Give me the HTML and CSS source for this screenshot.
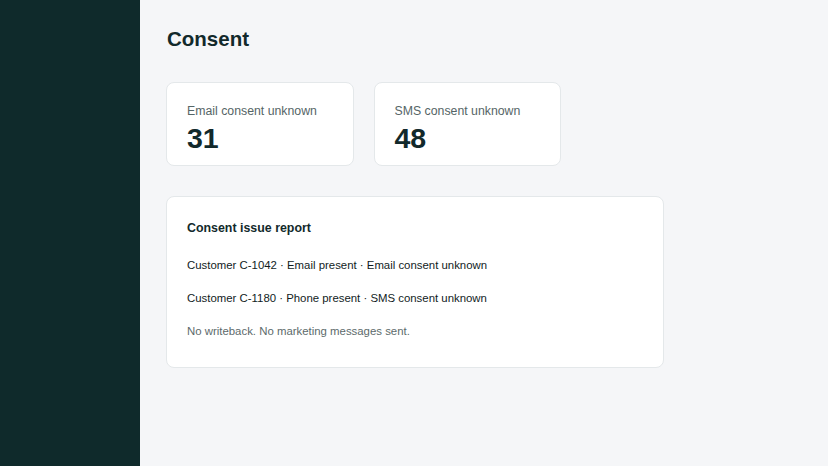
FILE: index.html
```html
<!DOCTYPE html>
<html lang="en">
<head>
<meta charset="utf-8">
<title>Consent</title>
<link rel="stylesheet" href="styles.css">
</head>
<body>
<div class="app">
  <aside class="sidebar"></aside>
  <main class="main">
    <h1 class="page-title">Consent</h1>
    <div class="stats">
      <div class="stat-card">
        <div class="stat-label">Email consent unknown</div>
        <div class="stat-value">31</div>
      </div>
      <div class="stat-card">
        <div class="stat-label">SMS consent unknown</div>
        <div class="stat-value">48</div>
      </div>
    </div>
    <section class="report">
      <h2 class="report-title">Consent issue report</h2>
      <div class="report-rows">
        <div class="report-row">Customer C-1042 · Email present · Email consent unknown</div>
        <div class="report-row">Customer C-1180 · Phone present · SMS consent unknown</div>
        <div class="report-note">No writeback. No marketing messages sent.</div>
      </div>
    </section>
  </main>
</div>
</body>
</html>
```
FILE: styles.css
```css
* { box-sizing: border-box; }
html, body {
  margin: 0;
  padding: 0;
  height: 100%;
}
body {
  font-family: "Liberation Sans", Arial, Helvetica, sans-serif;
  background: #f5f6f8;
  color: #12292b;
}
.app {
  display: flex;
  min-height: 100%;
}
.sidebar {
  width: 140px;
  flex: 0 0 140px;
  background: #0f2a2b;
}
.main {
  flex: 1;
  padding: 27px 26px;
}
.page-title {
  margin: 0 0 0 1px;
  font-size: 20.5px;
  line-height: 24px;
  font-weight: 700;
  color: #12292b;
}
.stats {
  display: flex;
  gap: 20px;
  margin-top: 31px;
}
.stat-card {
  width: 187.5px;
  background: #fff;
  border: 1px solid #e4e8ea;
  border-radius: 8px;
  padding: 20px 20px 10px;
}
.stat-label {
  font-size: 12.3px;
  line-height: 16px;
  color: #556566;
}
.stat-value {
  margin-top: 2px;
  font-size: 28.5px;
  line-height: 34px;
  font-weight: 700;
  color: #12292b;
}
.report {
  width: 497.5px;
  margin-top: 30px;
  background: #fff;
  border: 1px solid #e4e8ea;
  border-radius: 8px;
  padding: 23px 20px 27.5px;
}
.report-title {
  margin: 0 0 21px;
  font-size: 12.4px;
  line-height: 16px;
  font-weight: 700;
  color: #12292b;
}
.report-rows {
  display: flex;
  flex-direction: column;
  gap: 17px;
}
.report-row {
  font-size: 11.4px;
  line-height: 16px;
  color: #111c1d;
}
.report-note {
  font-size: 11.4px;
  line-height: 16px;
  color: #5c6a6b;
}
```
